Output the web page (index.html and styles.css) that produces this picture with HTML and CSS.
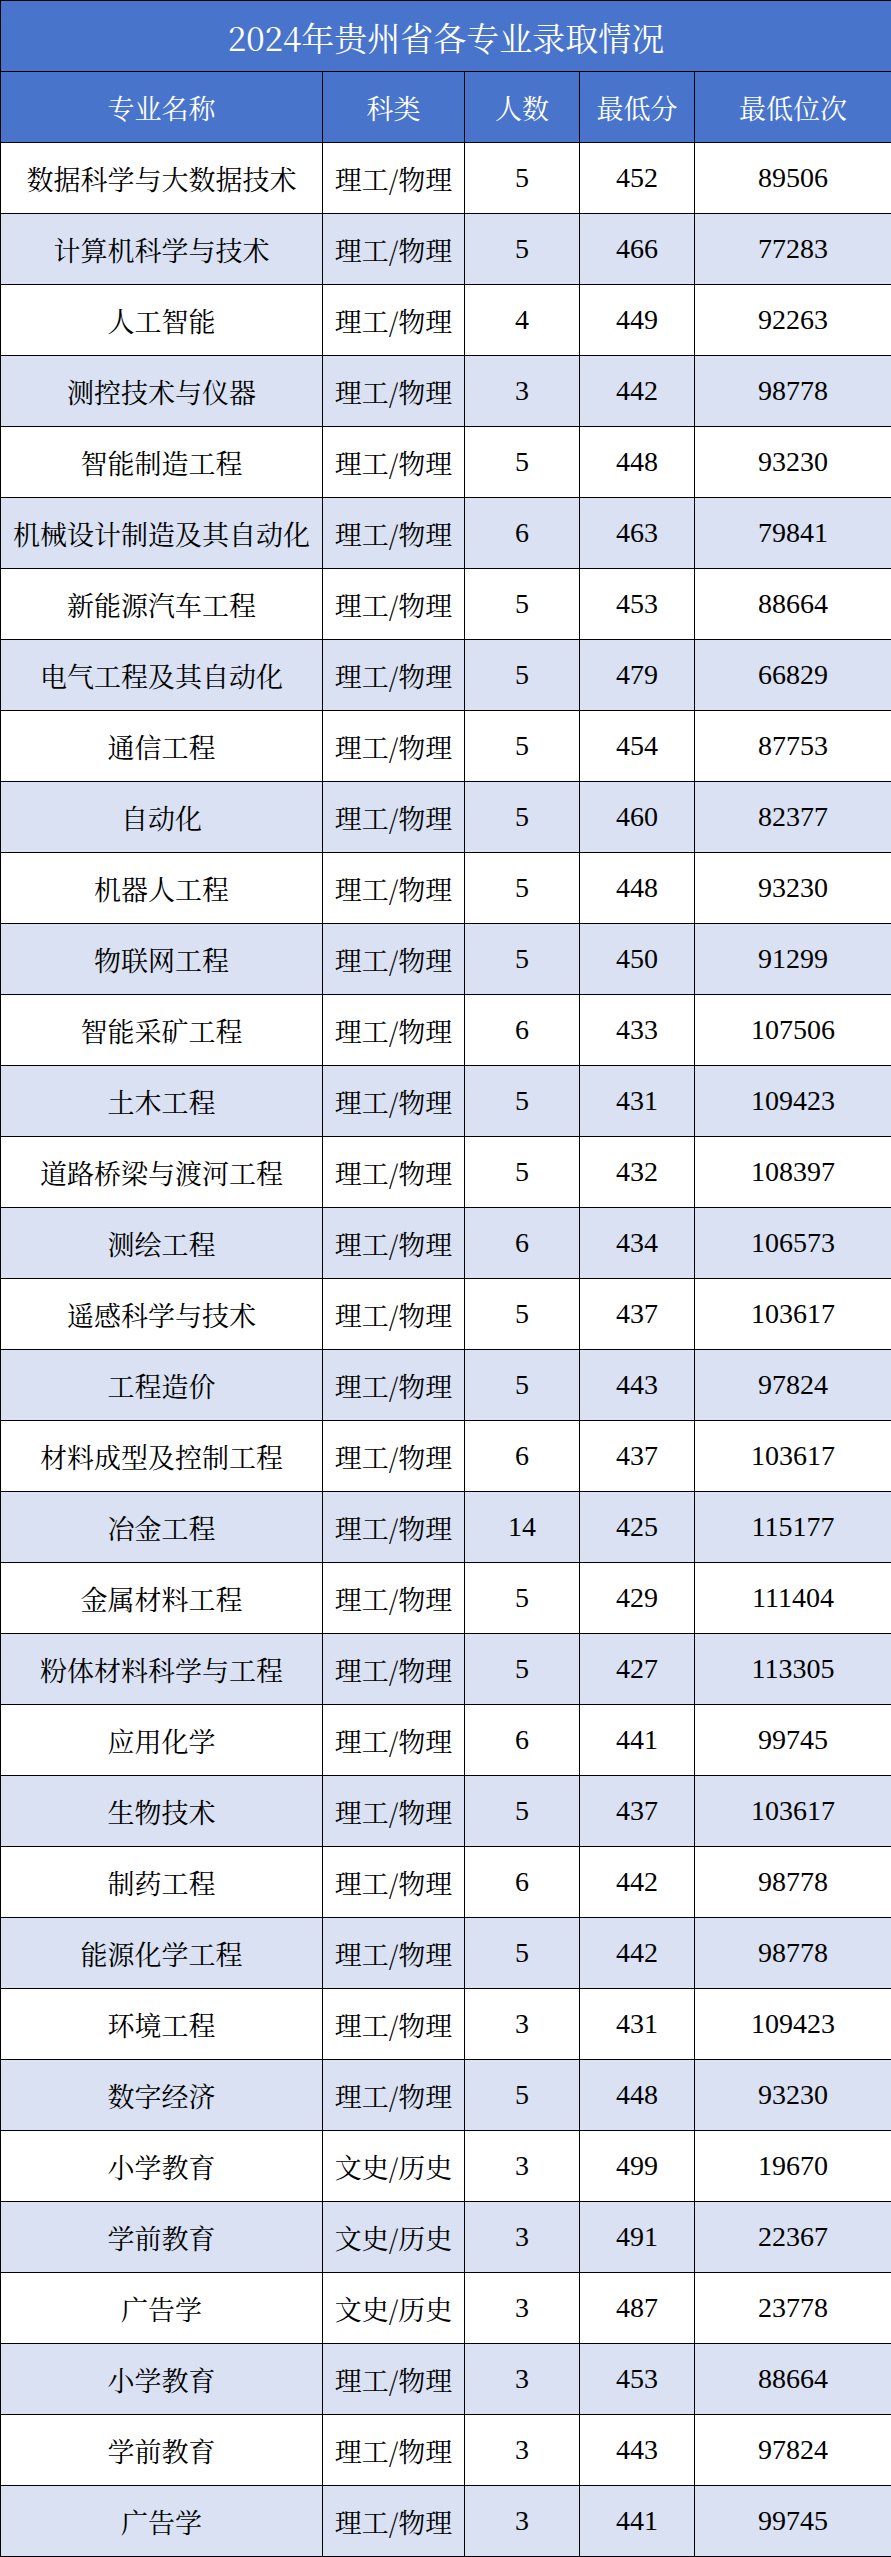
FILE: index.html
```html
<!DOCTYPE html>
<html lang="zh-CN">
<head>
<meta charset="utf-8">
<title>2024年贵州省各专业录取情况</title>
<link rel="stylesheet" href="styles.css">
</head>
<body>
<table class="sheet">
  <colgroup>
    <col class="c-name">
    <col class="c-type">
    <col class="c-num">
    <col class="c-score">
    <col class="c-rank">
  </colgroup>
  <thead>
    <tr class="title-row"><th colspan="5" class="title">2024年贵州省各专业录取情况</th></tr>
    <tr class="head-row">
      <th>专业名称</th><th>科类</th><th>人数</th><th>最低分</th><th>最低位次</th>
    </tr>
  </thead>
  <tbody>
    <tr><td>数据科学与大数据技术</td><td>理工/物理</td><td class="n">5</td><td class="n">452</td><td class="n">89506</td></tr>
    <tr><td>计算机科学与技术</td><td>理工/物理</td><td class="n">5</td><td class="n">466</td><td class="n">77283</td></tr>
    <tr><td>人工智能</td><td>理工/物理</td><td class="n">4</td><td class="n">449</td><td class="n">92263</td></tr>
    <tr><td>测控技术与仪器</td><td>理工/物理</td><td class="n">3</td><td class="n">442</td><td class="n">98778</td></tr>
    <tr><td>智能制造工程</td><td>理工/物理</td><td class="n">5</td><td class="n">448</td><td class="n">93230</td></tr>
    <tr><td>机械设计制造及其自动化</td><td>理工/物理</td><td class="n">6</td><td class="n">463</td><td class="n">79841</td></tr>
    <tr><td>新能源汽车工程</td><td>理工/物理</td><td class="n">5</td><td class="n">453</td><td class="n">88664</td></tr>
    <tr><td>电气工程及其自动化</td><td>理工/物理</td><td class="n">5</td><td class="n">479</td><td class="n">66829</td></tr>
    <tr><td>通信工程</td><td>理工/物理</td><td class="n">5</td><td class="n">454</td><td class="n">87753</td></tr>
    <tr><td>自动化</td><td>理工/物理</td><td class="n">5</td><td class="n">460</td><td class="n">82377</td></tr>
    <tr><td>机器人工程</td><td>理工/物理</td><td class="n">5</td><td class="n">448</td><td class="n">93230</td></tr>
    <tr><td>物联网工程</td><td>理工/物理</td><td class="n">5</td><td class="n">450</td><td class="n">91299</td></tr>
    <tr><td>智能采矿工程</td><td>理工/物理</td><td class="n">6</td><td class="n">433</td><td class="n">107506</td></tr>
    <tr><td>土木工程</td><td>理工/物理</td><td class="n">5</td><td class="n">431</td><td class="n">109423</td></tr>
    <tr><td>道路桥梁与渡河工程</td><td>理工/物理</td><td class="n">5</td><td class="n">432</td><td class="n">108397</td></tr>
    <tr><td>测绘工程</td><td>理工/物理</td><td class="n">6</td><td class="n">434</td><td class="n">106573</td></tr>
    <tr><td>遥感科学与技术</td><td>理工/物理</td><td class="n">5</td><td class="n">437</td><td class="n">103617</td></tr>
    <tr><td>工程造价</td><td>理工/物理</td><td class="n">5</td><td class="n">443</td><td class="n">97824</td></tr>
    <tr><td>材料成型及控制工程</td><td>理工/物理</td><td class="n">6</td><td class="n">437</td><td class="n">103617</td></tr>
    <tr><td>冶金工程</td><td>理工/物理</td><td class="n">14</td><td class="n">425</td><td class="n">115177</td></tr>
    <tr><td>金属材料工程</td><td>理工/物理</td><td class="n">5</td><td class="n">429</td><td class="n">111404</td></tr>
    <tr><td>粉体材料科学与工程</td><td>理工/物理</td><td class="n">5</td><td class="n">427</td><td class="n">113305</td></tr>
    <tr><td>应用化学</td><td>理工/物理</td><td class="n">6</td><td class="n">441</td><td class="n">99745</td></tr>
    <tr><td>生物技术</td><td>理工/物理</td><td class="n">5</td><td class="n">437</td><td class="n">103617</td></tr>
    <tr><td>制药工程</td><td>理工/物理</td><td class="n">6</td><td class="n">442</td><td class="n">98778</td></tr>
    <tr><td>能源化学工程</td><td>理工/物理</td><td class="n">5</td><td class="n">442</td><td class="n">98778</td></tr>
    <tr><td>环境工程</td><td>理工/物理</td><td class="n">3</td><td class="n">431</td><td class="n">109423</td></tr>
    <tr><td>数字经济</td><td>理工/物理</td><td class="n">5</td><td class="n">448</td><td class="n">93230</td></tr>
    <tr><td>小学教育</td><td>文史/历史</td><td class="n">3</td><td class="n">499</td><td class="n">19670</td></tr>
    <tr><td>学前教育</td><td>文史/历史</td><td class="n">3</td><td class="n">491</td><td class="n">22367</td></tr>
    <tr><td>广告学</td><td>文史/历史</td><td class="n">3</td><td class="n">487</td><td class="n">23778</td></tr>
    <tr><td>小学教育</td><td>理工/物理</td><td class="n">3</td><td class="n">453</td><td class="n">88664</td></tr>
    <tr><td>学前教育</td><td>理工/物理</td><td class="n">3</td><td class="n">443</td><td class="n">97824</td></tr>
    <tr><td>广告学</td><td>理工/物理</td><td class="n">3</td><td class="n">441</td><td class="n">99745</td></tr>
  </tbody>
</table>
</body>
</html>
```

FILE: styles.css
```css
html, body {
  margin: 0;
  padding: 0;
  background: #ffffff;
}

.sheet {
  width: 891px;
  border-collapse: collapse;
  table-layout: fixed;
  font-family: "Noto Serif CJK SC", "Liberation Serif", "Noto Sans CJK SC", serif;
  font-size: 27px;
  color: #000000;
}

.c-name { width: 322px; }
.c-type { width: 142px; }
.c-num { width: 115px; }
.c-score { width: 115px; }
.c-rank { width: 197px; }

.sheet th,
.sheet td {
  border: 1px solid #000000;
  padding: 0;
  height: 70px;
  text-align: center;
  vertical-align: middle;
  white-space: nowrap;
  font-weight: normal;
  line-height: 1;
}

.title-row th,
.head-row th {
  background: #4874cb;
  color: #ffffff;
}

.title {
  font-size: 33px;
}

.sheet td.n {
  font-family: "Liberation Serif", serif;
  font-size: 28px;
}

.sheet tbody tr:nth-child(even) td {
  background: #d9e1f2;
}
```
